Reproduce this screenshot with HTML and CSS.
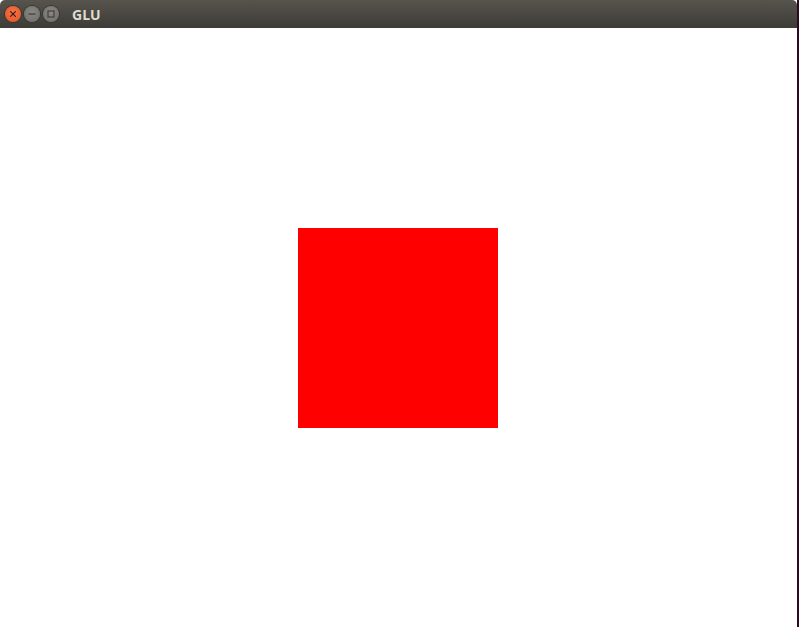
FILE: index.html
```html
<!DOCTYPE html>
<html>
<head>
<meta charset="utf-8">
<link rel="stylesheet" href="styles.css">
</head>
<body>
<div class="desktop">
  <div class="window">
    <div class="titlebar">
      <div class="buttons">
        <span class="btn close"><svg width="16" height="16" viewBox="0 0 16 16"><path d="M5.6 5.6L10.4 10.4M10.4 5.6L5.6 10.4" stroke="#3a1a10" stroke-width="1.2" stroke-linecap="round"/></svg></span>
        <span class="btn"><svg width="16" height="16" viewBox="0 0 16 16"><path d="M4.5 8H11.5" stroke="#3c3b37" stroke-width="1.2"/></svg></span>
        <span class="btn"><svg width="16" height="16" viewBox="0 0 16 16"><rect x="5" y="5" width="6" height="6" fill="none" stroke="#3c3b37" stroke-width="1.1"/></svg></span>
      </div>
      <span class="title">GLU</span>
    </div>
    <div class="content">
      <div class="square"></div>
    </div>
  </div>
  <div class="edge"></div>
</div>
</body>
</html>
```
FILE: styles.css
```css
html, body {
  margin: 0;
  padding: 0;
  width: 799px;
  height: 627px;
  overflow: hidden;
  background: #2c0a20;
}
.desktop {
  display: flex;
  width: 799px;
  height: 627px;
}
.window {
  width: 797px;
  height: 627px;
  display: flex;
  flex-direction: column;
  background: #ffffff;
}
.titlebar {
  height: 28px;
  flex: none;
  display: flex;
  align-items: center;
  background: linear-gradient(#57544e, #3d3b36);
  border-radius: 5px 5px 0 0;
  box-sizing: border-box;
  padding-left: 5px;
}
.buttons {
  display: flex;
  gap: 3px;
}
.btn {
  width: 16px;
  height: 16px;
  border-radius: 50%;
  background: radial-gradient(circle at 50% 40%, #8a8882, #6e6c67);
  box-shadow: 0 0 0 1px #3a3834;
  display: flex;
}
.btn.close {
  background: radial-gradient(circle at 50% 40%, #f5764b, #e2501f);
}
.title {
  margin-left: 13px;
  font-family: "Open Sans", sans-serif;
  font-weight: bold;
  font-size: 14px;
  color: #dfdbd2;
}
.content {
  flex: 1;
  display: flex;
  align-items: center;
  justify-content: center;
  padding-right: 1px;
}
.square {
  width: 200px;
  height: 200px;
  background: #ff0000;
}
.edge {
  width: 2px;
  height: 627px;
  background: #2c0a20;
}
```
